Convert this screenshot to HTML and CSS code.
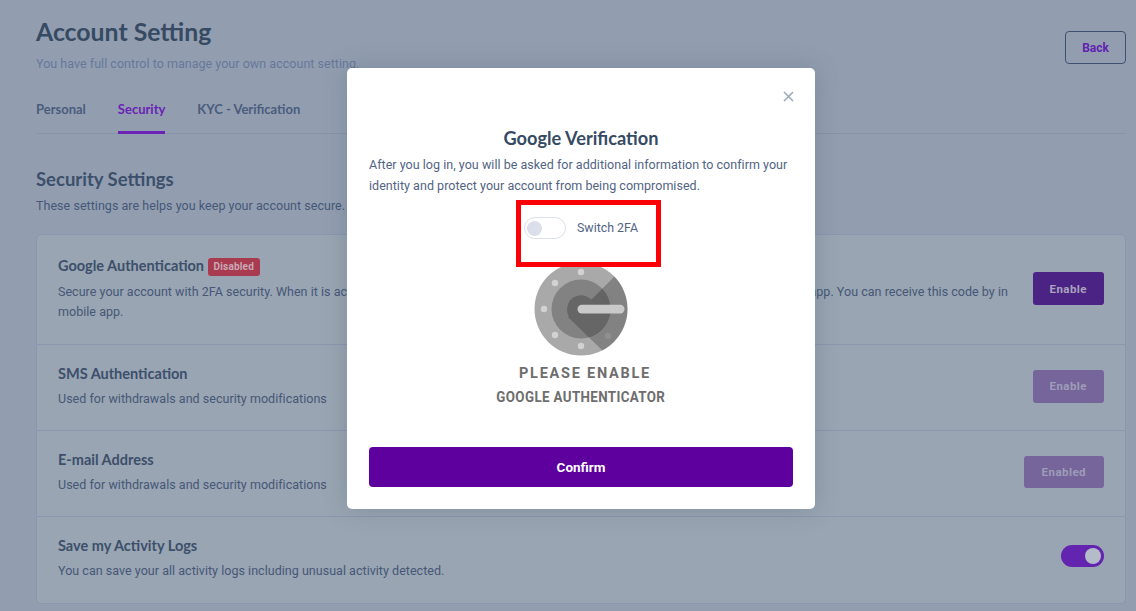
FILE: index.html
```html
<!DOCTYPE html>
<html lang="en">
<head>
<meta charset="utf-8">
<title>Account Setting</title>
<link rel="stylesheet" href="styles.css">
</head>
<body>
<main class="page">
  <header class="page-head">
    <div>
      <h1 class="page-title">Account Setting</h1>
      <p class="page-sub">You have full control to manage your own account setting.</p>
    </div>
    <a class="back-btn">Back</a>
  </header>
  <nav class="tabs">
    <a class="tab">Personal</a>
    <a class="tab tab-active">Security</a>
    <a class="tab">KYC - Verification</a>
  </nav>
  <section class="section">
    <h2 class="section-title">Security Settings</h2>
    <p class="section-sub">These settings are helps you keep your account secure.</p>
    <div class="card">
      <div class="row row-first">
        <div class="row-text">
          <h3 class="row-title">Google Authentication <span class="badge">Disabled</span></h3>
          <p class="row-desc">Secure your account with 2FA security. When it is activated you will need to enter not only your password, but also a special code using app. You can receive this code by in mobile app.</p>
        </div>
        <a class="btn">Enable</a>
      </div>
      <div class="row">
        <div class="row-text">
          <h3 class="row-title">SMS Authentication</h3>
          <p class="row-desc">Used for withdrawals and security modifications</p>
        </div>
        <a class="btn btn-muted">Enable</a>
      </div>
      <div class="row">
        <div class="row-text">
          <h3 class="row-title">E-mail Address</h3>
          <p class="row-desc">Used for withdrawals and security modifications</p>
        </div>
        <a class="btn btn-muted btn-wide">Enabled</a>
      </div>
      <div class="row">
        <div class="row-text">
          <h3 class="row-title">Save my Activity Logs</h3>
          <p class="row-desc">You can save your all activity logs including unusual activity detected.</p>
        </div>
        <span class="toggle-on"><span class="toggle-on-knob"></span></span>
      </div>
    </div>
  </section>
</main>

<div class="modal">
  <button class="modal-close" aria-label="Close">
    <svg width="11" height="11" viewBox="0 0 11 11"><path d="M1 1l9 9M10 1l-9 9" stroke="#9aa7bd" stroke-width="1.5" fill="none"/></svg>
  </button>
  <h2 class="modal-title">Google Verification</h2>
  <p class="modal-text">After you log in, you will be asked for additional information to confirm your identity and protect your account from being compromised.</p>
  <div class="switch-box">
    <span class="toggle-off"><span class="toggle-off-knob"></span></span>
    <span class="switch-label">Switch 2FA</span>
  </div>
  <div class="auth-logo">
    <svg width="96" height="96" viewBox="-48 -48 96 96">
      <defs><clipPath id="disc"><circle r="46.5"/></clipPath></defs>
      <circle r="46.5" fill="#a9a9a9"/>
      <g fill="#d2d2d2">
        <circle cx="0" cy="-37" r="3.2"/>
        <circle cx="-26" cy="-26" r="3.2"/>
        <circle cx="-37" cy="0" r="3.2"/>
        <circle cx="-26" cy="26" r="3.2"/>
        <circle cx="0" cy="37" r="3.2"/>
      </g>
      <circle r="29.5" fill="#828282"/>
      <g clip-path="url(#disc)">
        <path d="M34 -33L12 -11L-13 8L22 42L60 60L60 -33Z" fill="#000" fill-opacity=".23"/>
      </g>
      <circle cx="27" cy="27" r="3.2" fill="#8f8f8f"/>
      <path d="M-14 0A14 14 0 0 1 12 -7L29 4A29 29 0 0 1 8 28L-10 10A14 14 0 0 1 -14 0Z" fill="#666"/>
      <rect x="-3.5" y="-4.2" width="47" height="8.6" rx="4.3" fill="#c9c9c9"/>
    </svg>
    <p class="auth-line1">PLEASE ENABLE</p>
    <p class="auth-line2">GOOGLE AUTHENTICATOR</p>
  </div>
  <a class="confirm-btn">Confirm</a>
</div>
</body>
</html>
```
FILE: styles.css
```css
* { box-sizing: border-box; }
html, body { margin: 0; height: 611px; overflow: hidden; }
body { background: #929eb0; font-family: Roboto, sans-serif; color: #465777; }
h1, h2, h3, p { margin: 0; }

.page { padding: 16px 10px 0 36px; }
.page-head { display: flex; justify-content: space-between; align-items: flex-start; }
.page-title { font: 700 24.8px/32px Lato, sans-serif; color: #364a63; }
.page-sub { margin-top: 8px; font-size: 12.5px; line-height: 16px; color: #66789a; letter-spacing: .03px; }
.back-btn { margin-top: 15px; width: 61px; height: 33px; display: flex; align-items: center; justify-content: center; border: 1px solid #3d5170; border-radius: 4px; color: #6123b0; font-size: 12px; font-weight: 700; }

.tabs { display: flex; gap: 32px; margin-top: 25px; height: 37px; border-bottom: 1px solid #8693a8; }
.tab { height: 37px; padding-top: 3px; font: 700 13px/18px Lato, sans-serif; color: #4a5c7c; }
.tab-active { color: #6a23b4; border-bottom: 3px solid #6a23b4; }

.section { margin-top: 34px; }
.section-title { font: 700 18.5px/22px Lato, sans-serif; color: #3c4f6b; }
.section-sub { margin-top: 6px; font-size: 12.5px; line-height: 20px; color: #465777; letter-spacing: .04px; }

.card { margin-top: 18px; height: 370px; background: #99a5b2; border: 1px solid #8a97ae; border-radius: 5px; }
.row { display: flex; align-items: center; justify-content: space-between; gap: 22px; height: 86px; padding: 0 21px 3px; border-top: 1px solid #8a97ae; }
.row:first-child { border-top: 0; }
.row-first { height: 109px; padding-bottom: 2px; }
.row-text { flex: 1; }
.row-title { font: 700 14.5px/20px Lato, sans-serif; color: #3c4f6b; }
.row-desc { margin-top: 5px; font-size: 12.5px; line-height: 20px; color: #465777; letter-spacing: .03px; }
.row-first .row-desc { margin-top: 6px; }
.badge { display: inline-block; vertical-align: 1px; padding: 0 6px; height: 18px; border-radius: 3px; background: #a93b50; color: #c8a9b4; font: 700 10px/18px Roboto, sans-serif; letter-spacing: .2px; }
.btn { flex: none; height: 33px; padding: 0 17px; display: flex; align-items: center; border-radius: 3px; background: #4b2384; color: #a9a3bd; font-size: 11.5px; font-weight: 700; letter-spacing: .45px; }
.btn-muted { background: #75659a; color: #9e9db8; }
.btn-wide { padding: 0 18px; height: 32px; }
.toggle-on { flex: none; width: 43px; height: 22px; margin-bottom: 5px; border-radius: 11px; background: #6324b0; display: flex; justify-content: flex-end; align-items: center; padding-right: 3px; }
.toggle-on-knob { width: 16px; height: 16px; border-radius: 50%; background: #b5bcc9; }

.modal { position: absolute; left: 347px; top: 68px; width: 468px; height: 441px; padding: 59px 22px 0; background: #fff; border-radius: 5px; box-shadow: 0 0 24px rgba(54, 74, 99, .25); }
.modal-close { position: absolute; top: 23px; right: 21px; width: 11px; height: 11px; padding: 0; border: 0; background: none; display: flex; }
.modal-title { text-align: center; font: 700 18.2px/22px Lato, sans-serif; color: #364a63; }
.modal-text { margin-top: 5px; font-size: 12.5px; line-height: 21px; color: #526484; letter-spacing: .03px; }
.switch-box { position: relative; z-index: 1; margin: 4px 0 0 147px; width: 145px; height: 67px; border: 5px solid #fb0007; display: flex; align-items: flex-start; padding: 12px 0 0 3px; gap: 11px; }
.toggle-off { width: 42px; height: 22px; border: 1px solid #dbdfea; border-radius: 11px; background: #fff; display: flex; align-items: center; padding-left: 2px; }
.toggle-off-knob { width: 15px; height: 15px; border-radius: 50%; background: #dbdfea; }
.switch-label { font-size: 12.4px; line-height: 22px; color: #526484; }
.auth-logo { margin-top: -6px; display: flex; flex-direction: column; align-items: center; }
.auth-line1 { margin: 8px 0 0 8px; font: 700 14.5px/18px Roboto, sans-serif; letter-spacing: 1.75px; color: #6e6e6e; }
.auth-line2 { margin-top: 6px; font: 700 14.5px/18px Roboto, sans-serif; letter-spacing: .4px; color: #6e6e6e; transform: scaleX(.92); white-space: nowrap; }
.confirm-btn { display: flex; align-items: center; justify-content: center; margin-top: 40px; height: 40px; padding-bottom: 1px; border-radius: 4px; background: #5e009e; color: #fff; font-size: 13.5px; font-weight: 700; }
```
